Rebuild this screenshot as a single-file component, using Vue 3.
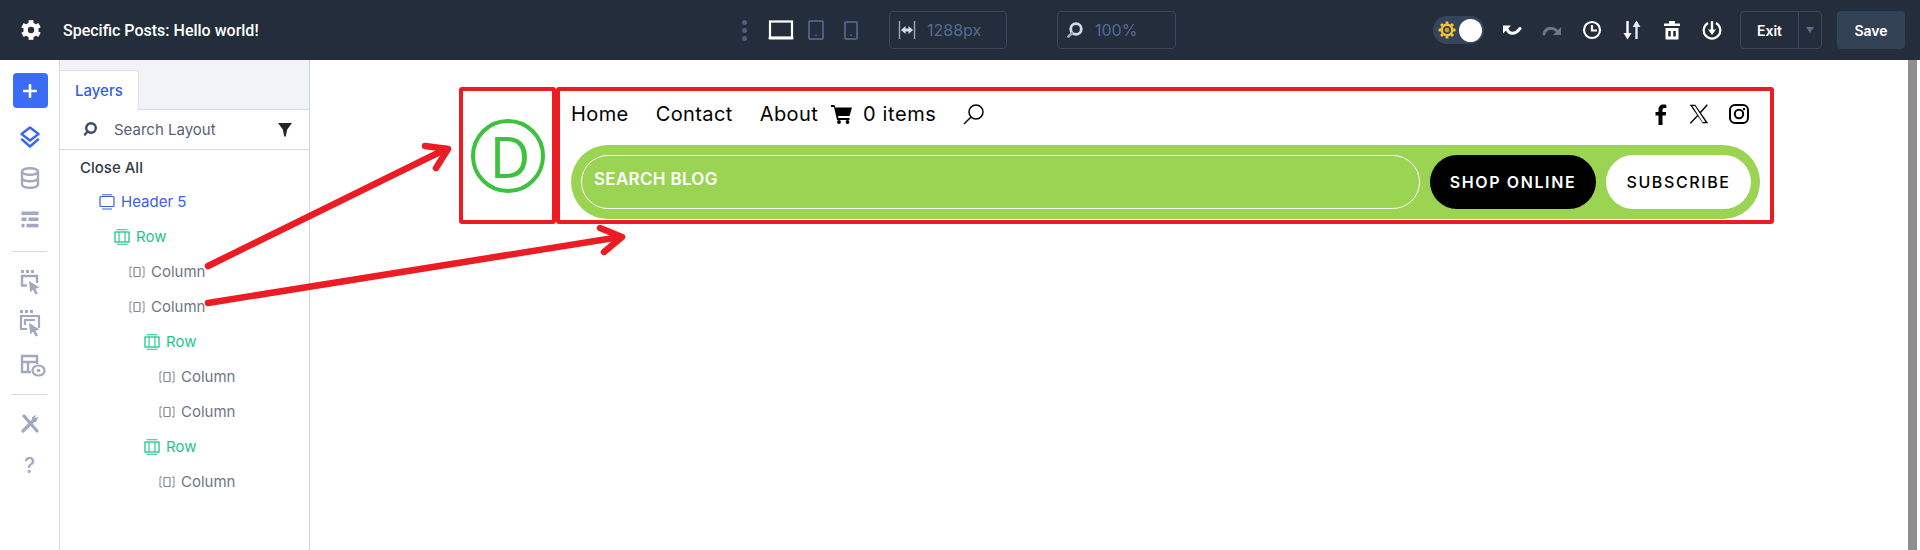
<script setup>
const layers = [
  { label: 'Header 5', kind: 'section', indent: 0 },
  { label: 'Row', kind: 'row', indent: 15 },
  { label: 'Column', kind: 'col', indent: 30 },
  { label: 'Column', kind: 'col', indent: 30 },
  { label: 'Row', kind: 'row', indent: 45 },
  { label: 'Column', kind: 'col', indent: 60 },
  { label: 'Column', kind: 'col', indent: 60 },
  { label: 'Row', kind: 'row', indent: 45 },
  { label: 'Column', kind: 'col', indent: 60 },
]
const gearTeeth = [0, 60, 120]
</script>

<template>
  <div class="app">
    <header class="topbar">
      <div class="tb-left">
        <svg class="gear" width="22" height="22" viewBox="0 0 22 22">
          <circle cx="11" cy="11" r="5.800" fill="none" stroke="#fff" stroke-width="3.600"/>
          <rect v-for="a in gearTeeth" :key="a" x="8.600" y="1.200" width="4.800" height="19.600" fill="#fff" :transform="`rotate(${a} 11 11)`"/>
          <circle cx="11" cy="11" r="3.200" fill="#232d3b"/>
        </svg>
        <span class="title">Specific Posts: Hello world!</span>
      </div>
      <div class="tb-center">
        <span class="dots"><i></i><i></i><i></i></span>
        <svg class="dev desk" width="26" height="20" viewBox="0 0 26 20"><rect x="2" y="1.500" width="22" height="16" fill="none" stroke="#fff" stroke-width="2.200"/><rect x="0.500" y="17" width="25" height="2.500" rx="1" fill="#fff"/></svg>
        <svg class="dev tab" width="16" height="20" viewBox="0 0 16 20"><rect x="1" y="1" width="14" height="18" rx="1" fill="none" stroke="#4c5f82" stroke-width="2"/><rect x="7" y="14.500" width="2" height="1.500" fill="#4c5f82"/></svg>
        <svg class="dev phone" width="14" height="19" viewBox="0 0 14 19"><rect x="1" y="1" width="12" height="17" rx="1" fill="none" stroke="#4c5f82" stroke-width="2"/><rect x="6" y="13.500" width="2" height="1.500" fill="#4c5f82"/></svg>
        <div class="field f-width">
          <svg width="18" height="20" viewBox="0 0 18 20"><path d="M1.500 1v18M16.500 1v18" stroke="#9aa6bb" stroke-width="1.400"/><path d="M3 10l4.500-4v2.500h3V6l4.500 4-4.500 4v-2.500h-3V14z" fill="#d3dbe6"/></svg>
          <span>1288px</span>
        </div>
        <div class="field f-zoom">
          <svg width="18" height="18" viewBox="0 0 18 18"><circle cx="10" cy="8" r="5.300" fill="none" stroke="#d3dbe6" stroke-width="2.800"/><path d="M6 12l-3.500 3.500" stroke="#9aa6bb" stroke-width="2.800" stroke-linecap="round"/></svg>
          <span>100%</span>
        </div>
      </div>
      <div class="tb-right">
        <div class="toggle">
          <svg width="18" height="18" viewBox="0 0 18 18"><g fill="#f4c430"><circle cx="9" cy="9" r="6.500"/><rect x="7.600" y="0.500" width="2.800" height="17"/><rect x="0.500" y="7.600" width="17" height="2.800"/><rect x="7.600" y="0.500" width="2.800" height="17" transform="rotate(45 9 9)"/><rect x="7.600" y="0.500" width="2.800" height="17" transform="rotate(-45 9 9)"/></g><circle cx="9" cy="9" r="4" fill="#35455c"/><circle cx="9" cy="9" r="2.300" fill="#c99f28"/></svg>
          <span class="knob"></span>
        </div>
        <svg class="act" width="20" height="20" viewBox="0 0 20 20"><path d="M5 9c2 5.500 8 6 13-.5" fill="none" stroke="#fff" stroke-width="3" stroke-linecap="round"/><path d="M1 5.500h8L1 13.500z" fill="#fff"/></svg>
        <svg class="act" width="20" height="20" viewBox="0 0 20 20"><path d="M2 14c1.500-6 8-7.500 13-3" fill="none" stroke="#6b7686" stroke-width="3" stroke-linecap="round"/><path d="M19 7v8h-8z" fill="#6b7686"/></svg>
        <svg class="act" width="20" height="20" viewBox="0 0 20 20"><circle cx="10" cy="10" r="8" fill="none" stroke="#fff" stroke-width="2.200"/><path d="M10 5v5.500h5" fill="none" stroke="#fff" stroke-width="2.200"/></svg>
        <svg class="act" width="20" height="20" viewBox="0 0 20 20"><path d="M5.500 1v14" stroke="#fff" stroke-width="2.400"/><path d="M1.500 13h8l-4 6.500z" fill="#fff"/><path d="M14.500 19V6" stroke="#e4ebf3" stroke-width="2.400"/><path d="M10.500 7h8l-4-6.500z" fill="#e4ebf3"/></svg>
        <svg class="act" width="20" height="20" viewBox="0 0 20 20"><path d="M7 1h6v2.500h5V6H2V3.500h5z" fill="#fff"/><path d="M3.500 8h13v11.500h-13zM6.200 11v5.500h2.600V11zM11.200 11v5.500h2.600V11z" fill="#fff" fill-rule="evenodd"/></svg>
        <svg class="act" width="20" height="20" viewBox="0 0 20 20"><path d="M6 3a8.300 8.300 0 1 0 8 0" fill="none" stroke="#fff" stroke-width="2.200"/><path d="M10 1v10" stroke="#fff" stroke-width="2.400"/><path d="M6 9.500h8L10 15z" fill="#fff"/></svg>
        <div class="exit"><span class="exit-label">Exit</span><span class="exit-caret"></span></div>
        <button class="save">Save</button>
      </div>
    </header>

    <div class="body">
      <nav class="rail">
        <button class="add"><svg width="14" height="14" viewBox="0 0 14 14"><path d="M7 1v12M1 7h12" stroke="#fff" stroke-width="2.600" stroke-linecap="round"/></svg></button>
        <svg class="ri i-layers" width="22" height="22" viewBox="0 0 22 22"><path d="M11 1.500l8.500 6.500-8.500 6.500L2.500 8z" fill="none" stroke="#3a67ec" stroke-width="2.400" stroke-linejoin="round"/><path d="M3 13.500l8 7 8-7" fill="none" stroke="#3a67ec" stroke-width="2.400" stroke-linejoin="round" stroke-linecap="round"/></svg>
        <svg class="ri i-db" width="20" height="22" viewBox="0 0 20 22"><ellipse cx="10" cy="4.500" rx="8" ry="3.300" fill="none" stroke="#a2a8c0" stroke-width="2.400"/><path d="M2 4.500v13c0 1.800 3.600 3.300 8 3.300s8-1.500 8-3.300v-13M2 11c0 1.800 3.600 3.300 8 3.300s8-1.500 8-3.300" fill="none" stroke="#a2a8c0" stroke-width="2.400"/></svg>
        <svg class="ri i-tbl" width="18" height="17" viewBox="0 0 18 17"><g fill="#a2a8c0"><rect x="0.500" y="0.500" width="17" height="3.600"/><rect x="0.500" y="6.500" width="5" height="3.600"/><rect x="7.500" y="6.500" width="10" height="3.600"/><rect x="0.500" y="12.800" width="3" height="3.600"/><rect x="5.500" y="12.800" width="12" height="3.600"/></g></svg>
        <hr class="rule r1" />
        <svg class="ri i-s1" width="20" height="26" viewBox="0 0 20 26"><g fill="#a2a8c0"><rect x="1" y="1" width="3" height="3"/><rect x="6" y="1" width="3" height="3"/><rect x="11" y="1" width="3" height="3"/><path d="M9 12l10.500 6.500-4 1.200 2.500 4.800-2.500 1-2.300-4.800-3 2.600z"/></g><path d="M7 16.500H2V7h15v7" fill="none" stroke="#a2a8c0" stroke-width="2.400"/></svg>
        <svg class="ri i-s2" width="22" height="28" viewBox="0 0 22 28"><g fill="#a2a8c0"><rect x="1" y="1" width="3" height="3"/><rect x="6" y="1" width="3" height="3"/><rect x="11" y="1" width="3" height="3"/><path d="M10 14l10.500 6.500-4 1.200 2.500 4.800-2.500 1-2.300-4.800-3 2.600z"/></g><path d="M8 20H2V7h18v12M6 16v-5h10" fill="none" stroke="#a2a8c0" stroke-width="2.200"/></svg>
        <svg class="ri i-s3" width="26" height="24" viewBox="0 0 26 24"><path d="M11 18H2V2h15v8M2 8h15M8 8v10" fill="none" stroke="#a2a8c0" stroke-width="2.400"/><ellipse cx="18.500" cy="16.500" rx="6" ry="5" fill="#fff" stroke="#a2a8c0" stroke-width="2.200"/><circle cx="18.500" cy="16.500" r="1.800" fill="#a2a8c0"/></svg>
        <hr class="rule r2" />
        <svg class="ri i-tool" width="20" height="20" viewBox="0 0 20 20"><g fill="none" stroke="#a2a8c0" stroke-width="3.200"><path d="M4 2l13 15" stroke-linecap="round"/><path d="M14 6L3 17" stroke-linecap="round"/></g><path d="M12 3.500L16 .5l-1 3.500 3.500-1-2.500 5-4 .5z" fill="#a2a8c0"/></svg>
        <span class="q">?</span>
      </nav>

      <aside class="panel">
        <div class="tabs"><div class="tab-layers">Layers</div></div>
        <div class="search">
          <svg width="16" height="16" viewBox="0 0 16 16"><circle cx="9" cy="7" r="4.800" fill="none" stroke="#3c4a6b" stroke-width="2.400"/><path d="M5.500 10.500L3 13.500" stroke="#3c4a6b" stroke-width="2.400" stroke-linecap="round"/></svg>
          <span class="search-text">Search Layout</span>
          <svg class="funnel" width="14" height="15" viewBox="0 0 14 15"><path d="M0 1h14L9.200 7.500 7.800 14.500H6.200L4.800 7.500z" fill="#22272e"/></svg>
        </div>
        <div class="close-all">Close All</div>
        <ul class="tree">
          <li v-for="(l, i) in layers" :key="i" :class="['node', l.kind]" :style="{ paddingLeft: l.indent + 'px' }">
            <svg v-if="l.kind === 'section'" width="16" height="16" viewBox="0 0 16 16"><rect x="1" y="2.500" width="14" height="10" rx="1" fill="none" stroke="currentColor" stroke-width="1.200"/><path d="M3 .8h10M3 15h10" stroke="currentColor" stroke-width="1"/></svg>
            <svg v-else-if="l.kind === 'row'" width="16" height="16" viewBox="0 0 16 16"><rect x="1" y="3" width="14" height="10" fill="none" stroke="currentColor" stroke-width="1.300"/><path d="M5 3v10M11 3v10M2.500 .8h11M2.500 15.200h11" stroke="currentColor" stroke-width="1.100"/></svg>
            <svg v-else width="16" height="16" viewBox="0 0 16 16"><path d="M3 3H1v10h2M13 3h2v10h-2" fill="none" stroke="currentColor" stroke-width="1"/><rect x="5" y="3.500" width="6" height="9" rx=".5" fill="none" stroke="currentColor" stroke-width="1.200"/></svg>
            <span>{{ l.label }}</span>
          </li>
        </ul>
      </aside>

      <main class="canvas">
        <div class="site">
          <div class="logo-box">
            <div class="logo"><span>D</span></div>
          </div>
          <div class="main-box">
            <div class="menu">
              <a>Home</a><a>Contact</a><a class="about">About</a>
              <svg class="cart" width="22" height="20" viewBox="0 0 22 20"><path d="M0 1h3.500l.8 2.500H21l-2.500 8.500H7l.5 2h11v2H6L3 3H0z" fill="#000"/><circle cx="8" cy="18" r="1.900" fill="#000"/><circle cx="16.500" cy="18" r="1.900" fill="#000"/></svg>
              <span class="items">0 items</span>
              <svg class="mag" width="22" height="22" viewBox="0 0 22 22"><circle cx="13" cy="9" r="7" fill="none" stroke="#000" stroke-width="1.500"/><path d="M8 14l-7 7" stroke="#000" stroke-width="1.500"/></svg>
              <div class="social">
                <svg class="s-f" width="12" height="21" viewBox="0 0 12 21"><path d="M3.500 21V11.500H.500V8h3V5.500C3.500 2 5.500.5 8.300.5c1.300 0 2.500.1 3 .2v3.200H9.400C7.900 3.900 7.500 4.600 7.500 5.800V8h3.700l-.5 3.500H7.500V21z" fill="#000"/></svg>
                <svg class="s-x" width="20" height="20" viewBox="0 0 20 20"><path d="M.800.800h5.400l13 18.400h-5.400zM3.400 2.100l10.200 15.800h2.900L5.900 2.100z" fill="#000" fill-rule="evenodd"/><path d="M18.300.8L11.200 8.800M8.800 11.400L1.300 19.200" stroke="#000" stroke-width="1.400"/></svg>
                <svg class="s-i" width="20" height="20" viewBox="0 0 20 20"><rect x="1" y="1" width="18" height="18" rx="5" fill="none" stroke="#000" stroke-width="2"/><circle cx="10" cy="10" r="4.200" fill="none" stroke="#000" stroke-width="2"/><circle cx="15" cy="5" r="1.200" fill="#000"/></svg>
              </div>
            </div>
            <div class="bar">
              <div class="input">SEARCH BLOG</div>
              <button class="shop">SHOP ONLINE</button>
              <button class="sub">SUBSCRIBE</button>
            </div>
          </div>
        </div>
        <svg class="arrows" width="1598" height="490" viewBox="0 0 1598 490">
          <g fill="none" stroke="#ec1c24" stroke-width="6.500" stroke-linecap="round" stroke-linejoin="round">
            <path d="M-102 206L136 89"/>
            <path d="M115 86L138 89L126 108"/>
            <path d="M-102 243L310 177"/>
            <path d="M290 168L312 177L294 192"/>
          </g>
        </svg>
      </main>
      <div class="scroll"></div>
    </div>
  </div>
</template>

<style>
html, body { margin: 0; background: #fff; overflow: hidden; }
</style>

<style scoped>
.app { width: 1920px; height: 550px; display: flex; flex-direction: column; font-family: Inter, "Liberation Sans", sans-serif; overflow: hidden; }
.topbar { height: 60px; background: #232d3b; display: flex; align-items: center; position: relative; flex: none; }
.tb-left { display: flex; align-items: center; padding-left: 20px; gap: 21px; width: 745px; box-sizing: border-box; }
.gear { flex: none; }
.title { color: #fff; font-size: 16px; font-weight: 500; font-family: Roboto, sans-serif; }
.tb-center { display: flex; align-items: center; }
.dots { display: flex; flex-direction: column; gap: 3px; width: 6px; margin-left: -3px; margin-right: 20px; }
.dots i { width: 5px; height: 5px; border-radius: 50%; background: #4c5f82; }
.dev { flex: none; }
.desk { margin-right: 14px; }
.tab { margin-right: 20px; }
.field { height: 38px; box-sizing: border-box; border: 1px solid #3a465a; border-radius: 4px; display: flex; align-items: center; gap: 11px; padding-left: 8px; color: #566a92; font-size: 16px; }
.f-width { width: 118px; margin-left: 31px; }
.f-zoom { width: 119px; margin-left: 50px; }
.tb-right { margin-left: auto; display: flex; align-items: center; padding-right: 15px; }
.toggle { width: 51px; height: 28px; border-radius: 14px; background: #35455c; display: flex; align-items: center; justify-content: space-between; padding: 0 2px 0 5px; box-sizing: border-box; }
.knob { width: 23px; height: 23px; border-radius: 50%; background: #fff; }
.act { margin-left: 20px; flex: none; }
.toggle + .act { margin-left: 18px; }
.exit { margin-left: 18px; width: 82px; height: 38px; box-sizing: border-box; border: 1px solid #3a465a; border-radius: 4px; display: flex; }
.exit-label { width: 57px; border-right: 1px solid #3a465a; color: #fff; font-weight: 600; font-size: 14px; display: flex; align-items: center; justify-content: center; }
.exit-caret { flex: 1; display: flex; align-items: center; justify-content: center; }
.exit-caret::after { content: ""; border-left: 4px solid transparent; border-right: 4px solid transparent; border-top: 6px solid #5d6d88; }
.save { margin-left: 15px; width: 68px; height: 38px; border: 0; border-radius: 4px; background: #334155; color: #fff; font: 600 14px Inter, sans-serif; }

.body { flex: 1; display: flex; min-height: 0; }
.rail { width: 60px; box-sizing: border-box; border-right: 1px solid #d8dade; flex: none; display: flex; flex-direction: column; align-items: center; padding-top: 13px; }
.add { width: 35px; height: 35px; border: 0; border-radius: 4px; background: #3b6cf6; display: flex; align-items: center; justify-content: center; padding: 0; margin-left: 1px; flex: none; }
.ri { flex: none; display: block; }
.i-layers { margin-top: 18px; }
.i-db { margin-top: 19px; }
.i-tbl { margin-top: 22px; }
.rule { width: 35px; border: 0; border-top: 1px solid #d8dade; margin: 0; flex: none; }
.r1 { margin-top: 23px; }
.i-s1 { margin-top: 17px; }
.i-s2 { margin-top: 14px; }
.i-s3 { margin-top: 17px; margin-left: 6px; }
.r2 { margin-top: 16px; }
.i-tool { margin-top: 19px; }
.q { margin-top: 20px; color: #a2a8c0; font-size: 21px; line-height: 24px; font-weight: 500; }

.panel { width: 250px; box-sizing: border-box; border-right: 1px solid #d0d3d8; flex: none; }
.tabs { height: 50px; background: #f1f3f8; border-bottom: 1px solid #d8dbe2; box-sizing: border-box; display: flex; align-items: flex-end; }
.tab-layers { width: 79px; height: 40px; box-sizing: border-box; background: #fff; border: 1px solid #dfe2e8; border-left: 0; border-bottom: 0; border-top-right-radius: 3px; margin-bottom: -1px; color: #2f5fe0; font-size: 15px; font-weight: 500; padding: 10px 0 0 15px; }
.search { height: 40px; border-bottom: 1px solid #d8dbe2; box-sizing: border-box; display: flex; align-items: center; padding: 0 0 1px 22px; }
.search-text { margin-left: 16px; color: #575f78; font-size: 15px; }
.funnel { margin-left: auto; margin-right: 17px; }
.close-all { margin: 9px 0 0 20px; height: 18px; line-height: 18px; font-size: 15px; color: #333a45; font-weight: 500; }
.tree { list-style: none; margin: 7px 0 0; padding: 0 0 0 39px; }
.node { height: 35px; display: flex; align-items: center; gap: 6px; font-size: 15px; }
.node svg { flex: none; }
.section { color: #3b5fe0; }
.row { color: #1fc48d; }
.col { color: #6e7686; }
.col svg { color: #808796; }

.canvas { flex: 1; position: relative; padding: 27px 0 0 149px; min-width: 0; }
.site { display: flex; width: 1315px; height: 137px; }
.logo-box { width: 97px; box-sizing: border-box; border: 4px solid #ec1c24; border-radius: 3px; display: flex; align-items: center; justify-content: center; flex: none; }
.logo { width: 74px; height: 74px; box-sizing: border-box; border: 4px solid #3cc23c; border-radius: 50%; display: flex; align-items: center; justify-content: center; color: #3cc23c; font-size: 56px; font-weight: 400; line-height: 1; font-family: "Open Sans", sans-serif; padding-left: 5px; }
.main-box { flex: 1; box-sizing: border-box; border: 4px solid #ec1c24; border-radius: 3px; padding: 0 10px 0 11px; }
.menu { height: 54px; box-sizing: border-box; padding-bottom: 8px; display: flex; align-items: center; font-size: 20px; color: #000; letter-spacing: .4px; }
.menu a { margin-right: 27px; }
.menu a.about { margin-right: 13px; }
.items { margin-left: 10px; letter-spacing: .6px; }
.mag { margin-left: 27px; }
.social { margin-left: auto; display: flex; align-items: center; margin-right: 11px; }
.s-x { margin-left: 22px; }
.s-i { margin-left: 20px; }
.bar { height: 74px; border-radius: 37px; background: #9bd353; display: flex; align-items: center; padding: 0 9px 0 10px; box-sizing: border-box; }
.input { width: 839px; height: 54px; box-sizing: border-box; border: 1px solid #fff; border-radius: 27px; color: #fff; font-weight: 600; font-size: 17px; padding: 13px 0 0 12px; flex: none; letter-spacing: .3px; }
.shop, .sub { height: 54px; border: 0; border-radius: 27px; font: 600 16px Inter, sans-serif; letter-spacing: 1.600px; padding: 0; flex: none; }
.shop { width: 166px; margin-left: 10px; background: #000; color: #fff; }
.sub { width: 145px; margin-left: 10px; background: #fff; color: #000; font-weight: 500; }
.arrows { position: absolute; left: 0; top: 0; overflow: visible; pointer-events: none; }
.scroll { flex: none; width: 9px; margin-right: 3px; background: #8f8f8f; }
</style>
